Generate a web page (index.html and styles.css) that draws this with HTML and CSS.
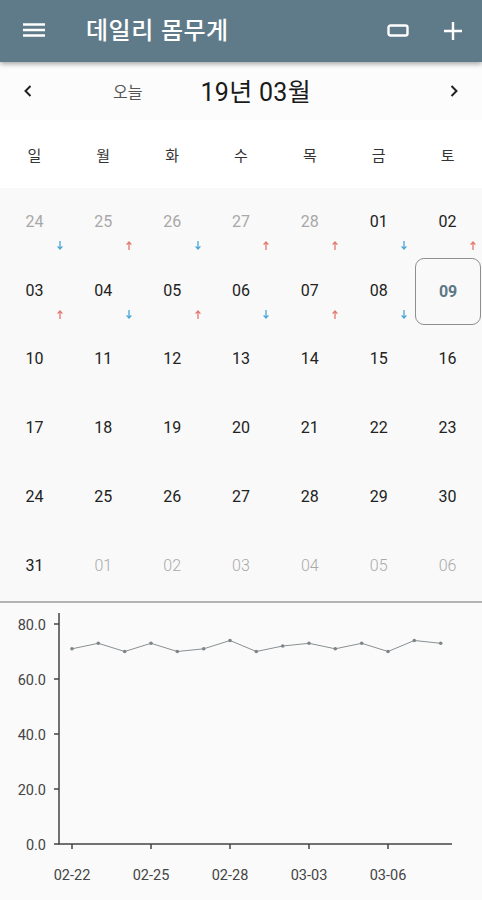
FILE: index.html
```html
<!DOCTYPE html>
<html lang="ko">
<head>
<meta charset="UTF-8" />
<meta name="viewport" content="width=device-width, initial-scale=1" />
<title>데일리 몸무게</title>
<link rel="stylesheet" href="styles.css">
</head>
<body>

  <header class="appbar">
    <svg class="icon-menu" width="24" height="14" viewBox="0 0 24 14">
      <path d="M1 1.5h22M1 7h22M1 12.5h22" stroke="#fff" stroke-width="2.4" />
    </svg>
    <h1 class="appbar-title">데일리 몸무게</h1>
    <div class="appbar-actions">
      <svg width="22" height="14" viewBox="0 0 22 14">
        <rect x="1.5" y="1.5" width="19" height="10" rx="2" fill="none" stroke="#fff" stroke-width="2.4" />
      </svg>
      <svg width="20" height="20" viewBox="0 0 20 20">
        <path d="M10 1v18M1 10h18" stroke="#fff" stroke-width="2.4" />
      </svg>
    </div>
  </header>

  <nav class="month-nav">
    <button class="nav-btn">
      <svg width="10" height="14" viewBox="0 0 10 14"><path d="M7.5 2L2.5 7l5 5" fill="none" stroke="#222" stroke-width="2" /></svg>
    </button>
    <span class="today">오늘</span>
    <span class="month-title">19년 03월</span>
    <span class="spacer"></span>
    <button class="nav-btn">
      <svg width="10" height="14" viewBox="0 0 10 14"><path d="M2.5 2l5 5-5 5" fill="none" stroke="#222" stroke-width="2" /></svg>
    </button>
  </nav>

  <div class="weekdays">
    <span>일</span><span>월</span><span>화</span><span>수</span><span>목</span><span>금</span><span>토</span>
  </div>

  <div class="calendar">
    <div class="day other">24<i class="arr down"></i></div>
    <div class="day other">25<i class="arr up"></i></div>
    <div class="day other">26<i class="arr down"></i></div>
    <div class="day other">27<i class="arr up"></i></div>
    <div class="day other">28<i class="arr up"></i></div>
    <div class="day">01<i class="arr down"></i></div>
    <div class="day">02<i class="arr up"></i></div>

    <div class="day">03<i class="arr up"></i></div>
    <div class="day">04<i class="arr down"></i></div>
    <div class="day">05<i class="arr up"></i></div>
    <div class="day">06<i class="arr down"></i></div>
    <div class="day">07<i class="arr up"></i></div>
    <div class="day">08<i class="arr down"></i></div>
    <div class="day selected"><span class="sel-box">09</span></div>

    <div class="day">10</div><div class="day">11</div><div class="day">12</div><div class="day">13</div>
    <div class="day">14</div><div class="day">15</div><div class="day">16</div>

    <div class="day">17</div><div class="day">18</div><div class="day">19</div><div class="day">20</div>
    <div class="day">21</div><div class="day">22</div><div class="day">23</div>

    <div class="day">24</div><div class="day">25</div><div class="day">26</div><div class="day">27</div>
    <div class="day">28</div><div class="day">29</div><div class="day">30</div>

    <div class="day">31</div>
    <div class="day next">01</div><div class="day next">02</div><div class="day next">03</div>
    <div class="day next">04</div><div class="day next">05</div><div class="day next">06</div>
  </div>

  <section class="chart">
    <svg width="482" height="298" viewBox="0 602 482 298">
      <g class="axis">
        <path d="M59 612V843H452" />
        <path d="M54 623h5M54 678h5M54 733h5M54 788h5M54 843h5" />
        <path d="M72 843v5M151 843v5M230 843v5M309 843v5M388 843v5" />
      </g>
      <g class="ylabels">
        <text x="46" y="628.5">80.0</text>
        <text x="46" y="683.5">60.0</text>
        <text x="46" y="738.5">40.0</text>
        <text x="46" y="793.5">20.0</text>
        <text x="46" y="848.5">0.0</text>
      </g>
      <g class="xlabels">
        <text x="72" y="879">02-22</text>
        <text x="151" y="879">02-25</text>
        <text x="230" y="879">02-28</text>
        <text x="309" y="879">03-03</text>
        <text x="388" y="879">03-06</text>
      </g>
      <polyline class="series" points="72,647.8 98.3,642.3 124.7,650.5 151,642.3 177.3,650.5 203.7,647.8 230,639.5 256.3,650.5 282.7,645 309,642.3 335.3,647.8 361.7,642.3 388,650.5 414.3,639.5 440.7,642.3" />
      <g class="dots">
        <circle cx="72" cy="647.8" r="1.8" /><circle cx="98.3" cy="642.3" r="1.8" />
        <circle cx="124.7" cy="650.5" r="1.8" /><circle cx="151" cy="642.3" r="1.8" />
        <circle cx="177.3" cy="650.5" r="1.8" /><circle cx="203.7" cy="647.8" r="1.8" />
        <circle cx="230" cy="639.5" r="1.8" /><circle cx="256.3" cy="650.5" r="1.8" />
        <circle cx="282.7" cy="645" r="1.8" /><circle cx="309" cy="642.3" r="1.8" />
        <circle cx="335.3" cy="647.8" r="1.8" /><circle cx="361.7" cy="642.3" r="1.8" />
        <circle cx="388" cy="650.5" r="1.8" /><circle cx="414.3" cy="639.5" r="1.8" />
        <circle cx="440.7" cy="642.3" r="1.8" />
      </g>
    </svg>
  </section>

</body>
</html>
```

FILE: styles.css
```css
html, body {
  margin: 0;
  padding: 0;
  height: 100%;
  overflow: hidden;
  background: #fafafa;
  font-family: Roboto, "Noto Sans CJK KR", sans-serif;
  color: #222;
}

/* top app bar */
.appbar {
  position: relative;
  z-index: 2;
  height: 62px;
  display: flex;
  align-items: center;
  padding: 0 19px 0 22px;
  background: #5f7b89;
  box-shadow: 0 2px 5px rgba(0, 0, 0, 0.35);
  color: #fff;
}

.icon-menu {
  display: block;
  margin-top: -2px;
}

.appbar-title {
  margin: -4px 0 0 40px;
  font-family: "Noto Sans CJK KR", sans-serif;
  font-size: 24px;
  font-weight: 500;
  line-height: 1;
  letter-spacing: 0.5px;
}

.appbar-actions {
  margin-left: auto;
  display: flex;
  align-items: center;
  gap: 34px;
}

.appbar-actions svg {
  display: block;
}

/* month navigation */
.month-nav {
  height: 58px;
  display: flex;
  align-items: center;
  background: #fcfcfc;
}

.nav-btn {
  width: 56px;
  height: 58px;
  border: none;
  background: none;
  padding: 0;
  display: flex;
  align-items: center;
  justify-content: center;
}

.today {
  margin-left: 57px;
  font-family: "Noto Sans CJK KR", sans-serif;
  font-size: 16px;
  color: #555;
}

.month-title {
  margin-left: 58px;
  font-size: 25px;
  color: #1a1a1a;
  margin-top: -2px;
  letter-spacing: 0.3px;
}

.spacer {
  flex: 1;
}

/* weekday header */
.weekdays {
  height: 68px;
  display: grid;
  grid-template-columns: repeat(7, 1fr);
  align-items: center;
  background: #fff;
  font-family: "Noto Sans CJK KR", sans-serif;
  font-size: 15px;
  color: #333;
  text-align: center;
}

/* calendar grid */
.calendar {
  display: grid;
  grid-template-columns: repeat(7, 1fr);
  grid-auto-rows: 68.8px;
  background: #f9f9f9;
  border-bottom: 2px solid #b3b3b3;
}

.day {
  position: relative;
  display: flex;
  align-items: center;
  justify-content: center;
  font-size: 16px;
  color: #222;
  padding-bottom: 2px;
}

.day.other {
  color: #a8a8a8;
}

.day.next {
  color: #aaa;
  font-weight: 300;
}

.day.selected {
  padding: 1px 1px 1px 2px;
}

.sel-box {
  flex: 1;
  align-self: stretch;
  display: flex;
  align-items: center;
  justify-content: center;
  border: 1.5px solid #8f8f8f;
  border-radius: 9px;
  font-weight: 700;
  color: #5c7785;
}

/* small change arrows */
.arr {
  position: absolute;
  right: 6px;
  top: 53px;
  width: 6px;
  height: 9px;
  background-repeat: no-repeat;
  background-size: 6px 9px;
}

.arr.up {
  background-image: url("data:image/svg+xml,%3Csvg xmlns='http://www.w3.org/2000/svg' width='6' height='9' viewBox='0 0 6 9'%3E%3Cpath d='M3 9V1M0.6 3.6L3 1l2.4 2.6' fill='none' stroke='%23e2786e' stroke-width='1.3'/%3E%3C/svg%3E");
}

.arr.down {
  background-image: url("data:image/svg+xml,%3Csvg xmlns='http://www.w3.org/2000/svg' width='6' height='9' viewBox='0 0 6 9'%3E%3Cpath d='M3 0v8M0.6 5.4L3 8l2.4-2.6' fill='none' stroke='%234aa6d6' stroke-width='1.3'/%3E%3C/svg%3E");
}

/* weight chart */
.chart svg {
  display: block;
}

.axis path {
  fill: none;
  stroke: #444;
  stroke-width: 1.5;
}

.ylabels text {
  font-size: 14.5px;
  fill: #444;
  text-anchor: end;
}

.xlabels text {
  font-size: 14.5px;
  fill: #444;
  text-anchor: middle;
}

.series {
  fill: none;
  stroke: #8a8f92;
  stroke-width: 1;
}

.dots circle {
  fill: #7d8588;
}
```
